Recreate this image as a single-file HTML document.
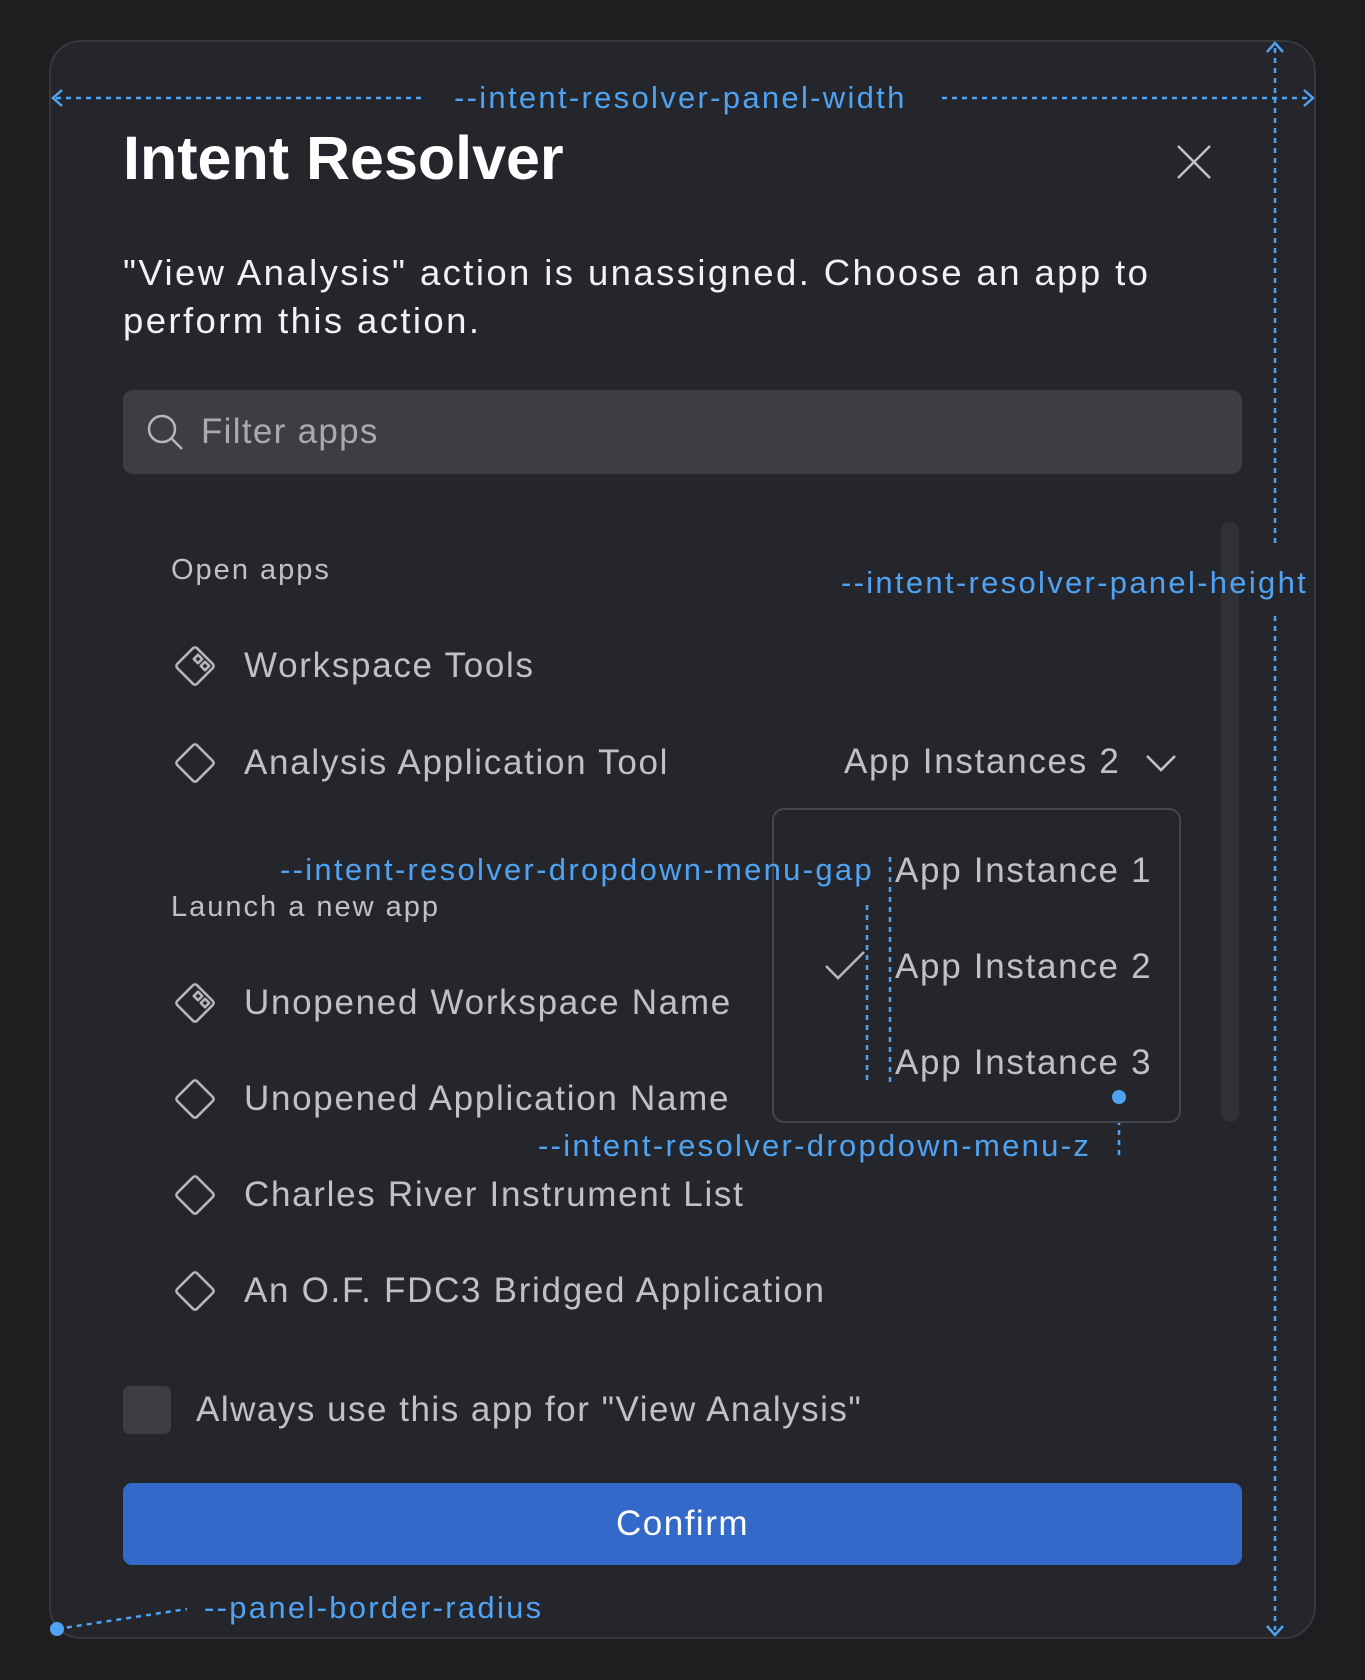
<!DOCTYPE html>
<html><head><meta charset="utf-8"><style>
*{margin:0;padding:0;box-sizing:border-box}
body{width:1365px;height:1680px;background:#1e1e20;position:relative;overflow:hidden;font-family:"Liberation Sans",sans-serif}
.a{position:absolute;white-space:nowrap}
.panel{position:absolute;left:49px;top:40px;width:1267px;height:1599px;background:#25262b;border:2px solid #37383d;border-radius:32px}
.item{font-size:35px;color:#c0c1c5;line-height:1;letter-spacing:1.7px}
.blue{color:#4fa3f2;font-size:31px;line-height:1;letter-spacing:2.3px}
.ic{position:absolute;width:44px;height:44px}
</style></head><body>
<div class="panel"></div>
<svg class="a" style="left:0;top:0" width="1365" height="1680">
<g stroke="#4fa3f2" stroke-width="2.5" fill="none">
<line x1="56" y1="98" x2="423" y2="98" stroke-dasharray="5 5"/>
<line x1="942" y1="98" x2="1310" y2="98" stroke-dasharray="5 5"/>
<polyline points="62,90 53,98 62,106"/>
<polyline points="1304,90 1313,98 1304,106"/>
<line x1="1275" y1="48" x2="1275" y2="544" stroke-dasharray="5 5"/>
<polyline points="1267,52 1275,43 1283,52"/>
<line x1="1275" y1="616" x2="1275" y2="1630" stroke-dasharray="5 5"/>
<polyline points="1267,1626 1275,1635 1283,1626"/>
<line x1="1119" y1="1100" x2="1119" y2="1157" stroke-dasharray="5 5"/>
<line x1="57" y1="1629" x2="187" y2="1609" stroke-dasharray="5 5"/>
</g>
<circle cx="57" cy="1629" r="7" fill="#4fa3f2"/>
</svg>
<div class="a blue" style="left:454px;top:82px">--intent-resolver-panel-width</div>
<div class="a" style="left:123px;top:128px;font-size:61px;font-weight:bold;color:#fff;line-height:1">Intent Resolver</div>
<svg class="a" style="left:1176px;top:144px" width="36" height="36"><g stroke="#c0c1c5" stroke-width="2.5"><line x1="2" y1="2" x2="34" y2="34"/><line x1="34" y1="2" x2="2" y2="34"/></g></svg>
<div class="a" style="left:123px;top:249px;font-size:36.5px;color:#f2f2f3;line-height:48px;white-space:normal;width:1090px;letter-spacing:2.4px">"View Analysis" action is unassigned. Choose an app to perform this action.</div>
<div class="a" style="left:123px;top:390px;width:1119px;height:84px;background:#3d3e43;border-radius:10px"></div>
<svg class="a" style="left:146px;top:413px" width="40" height="40"><g stroke="#b5b6ba" stroke-width="2.5" fill="none"><circle cx="16" cy="16" r="13"/><line x1="25" y1="25" x2="36" y2="36"/></g></svg>
<div class="a item" style="left:201px;top:414px;color:#a9aaae;letter-spacing:1.3px">Filter apps</div>
<div class="a" style="left:1221px;top:522px;width:18px;height:600px;background:#303136;border-radius:9px"></div>
<div class="a blue" style="left:841px;top:567px">--intent-resolver-panel-height</div>
<div class="a item" style="left:171px;top:556px;font-size:29px;letter-spacing:2px">Open apps</div>
<svg class="ic" style="left:173px;top:644px" viewBox="0 0 44 44"><g fill="none" stroke="#b5b6ba" stroke-width="2.6" stroke-linejoin="round"><rect x="8" y="8" width="28" height="28" rx="3" transform="rotate(45 22 22)"/><rect x="22" y="12" width="6" height="6" transform="rotate(45 25 15)"/><rect x="29" y="19" width="6" height="6" transform="rotate(45 32 22)"/></g></svg>
<div class="a item" style="left:244px;top:648px">Workspace Tools</div>
<svg class="ic" style="left:173px;top:741px" viewBox="0 0 44 44"><rect x="8" y="8" width="28" height="28" rx="3" transform="rotate(45 22 22)" fill="none" stroke="#b5b6ba" stroke-width="2.6"/></svg>
<div class="a item" style="left:244px;top:745px">Analysis Application Tool</div>
<div class="a item" style="left:844px;top:744px">App Instances 2</div>
<svg class="a" style="left:1144px;top:752px" width="34" height="22"><polyline points="3,4 17,18 31,4" fill="none" stroke="#c0c1c5" stroke-width="2.6"/></svg>
<div class="a item" style="left:171px;top:893px;font-size:29px;letter-spacing:2px">Launch a new app</div>
<svg class="ic" style="left:173px;top:981px" viewBox="0 0 44 44"><g fill="none" stroke="#b5b6ba" stroke-width="2.6" stroke-linejoin="round"><rect x="8" y="8" width="28" height="28" rx="3" transform="rotate(45 22 22)"/><rect x="22" y="12" width="6" height="6" transform="rotate(45 25 15)"/><rect x="29" y="19" width="6" height="6" transform="rotate(45 32 22)"/></g></svg>
<div class="a item" style="left:244px;top:985px">Unopened Workspace Name</div>
<svg class="ic" style="left:173px;top:1077px" viewBox="0 0 44 44"><rect x="8" y="8" width="28" height="28" rx="3" transform="rotate(45 22 22)" fill="none" stroke="#b5b6ba" stroke-width="2.6"/></svg>
<div class="a item" style="left:244px;top:1081px">Unopened Application Name</div>
<svg class="ic" style="left:173px;top:1173px" viewBox="0 0 44 44"><rect x="8" y="8" width="28" height="28" rx="3" transform="rotate(45 22 22)" fill="none" stroke="#b5b6ba" stroke-width="2.6"/></svg>
<div class="a item" style="left:244px;top:1177px">Charles River Instrument List</div>
<svg class="ic" style="left:173px;top:1269px" viewBox="0 0 44 44"><rect x="8" y="8" width="28" height="28" rx="3" transform="rotate(45 22 22)" fill="none" stroke="#b5b6ba" stroke-width="2.6"/></svg>
<div class="a item" style="left:244px;top:1273px">An O.F. FDC3 Bridged Application</div>
<div class="a" style="left:772px;top:808px;width:409px;height:315px;border:2.5px solid #45464b;border-radius:12px;background:#25262b"></div>
<div class="a blue" style="left:280px;top:854px">--intent-resolver-dropdown-menu-gap</div>
<div class="a item" style="left:895px;top:853px">App Instance 1</div>
<svg class="a" style="left:824px;top:950px" width="42" height="32"><polyline points="2,16 14,28 40,2" fill="none" stroke="#b5b6ba" stroke-width="2.6"/></svg>
<div class="a item" style="left:895px;top:949px">App Instance 2</div>
<div class="a item" style="left:895px;top:1045px">App Instance 3</div>
<svg class="a" style="left:0;top:0" width="1365" height="1680"><g stroke="#4fa3f2" stroke-width="2.5" stroke-dasharray="5 5"><line x1="867" y1="905" x2="867" y2="1084"/><line x1="890" y1="857" x2="890" y2="1084"/></g><circle cx="1119" cy="1097" r="7" fill="#4fa3f2"/></svg>
<div class="a blue" style="left:538px;top:1130px">--intent-resolver-dropdown-menu-z</div>
<div class="a" style="left:123px;top:1386px;width:48px;height:48px;background:#3d3e43;border-radius:7px"></div>
<div class="a item" style="left:196px;top:1392px;letter-spacing:1.5px">Always use this app for "View Analysis"</div>
<div class="a" style="left:123px;top:1483px;width:1119px;height:82px;background:#3369c8;border-radius:9px;color:#fff;font-size:35px;text-align:center;line-height:82px;letter-spacing:1.5px">Confirm</div>
<div class="a blue" style="left:204px;top:1592px">--panel-border-radius</div>
</body></html>
